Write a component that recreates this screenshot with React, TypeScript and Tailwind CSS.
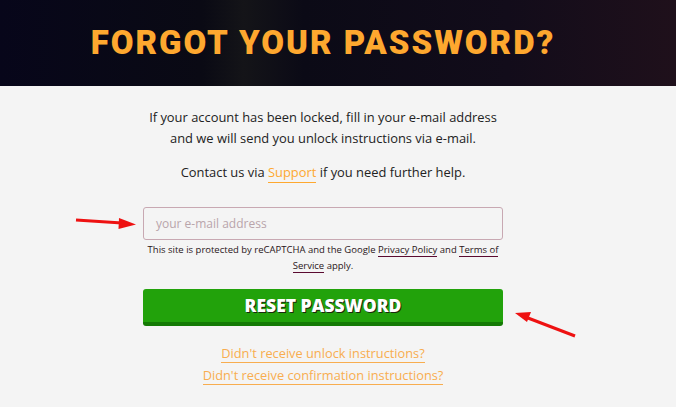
import React from "react";

export default function App() {
  return (
    <div className="relative min-h-[407px] w-[676px] bg-[#f4f4f4] overflow-hidden" style={{ fontFamily: '"Open Sans", sans-serif' }}>
      <div className="h-[86px] w-full bg-[linear-gradient(90deg,#07061a_0%,#0a0a14_30%,#141418_36%,#0b0a16_45%,#120c1a_75%,#1f101b_100%)] flex items-center">
        <div className="w-[360px] ml-[143px] flex justify-center">
          <h1 className="whitespace-nowrap text-[#fea82f] text-[33px] leading-none font-black tracking-[2px] mt-[-2px]" style={{ fontFamily: 'Roboto, sans-serif' }}>
            FORGOT YOUR PASSWORD?
          </h1>
        </div>
      </div>
      <div className="w-[360px] ml-[143px] flex flex-col items-center pt-[21px]">
        <p className="text-[12.9px] leading-[21px] text-[#222] text-center whitespace-nowrap">
          If your account has been locked, fill in your e-mail address<br />
          and we will send you unlock instructions via e-mail.
        </p>
        <p className="text-[12.9px] leading-[21px] text-[#222] text-center mt-[13px] whitespace-nowrap">
          Contact us via <a className="text-[#fea82f] border-b border-[#fea82f] pb-[1px]">Support</a> if you need further help.
        </p>
        <div className="mt-[24px] w-full">
          <div className="h-[33px] w-full rounded-[3px] border border-[#c8a8b2] bg-[#f4f4f4] flex items-center px-[12px]">
            <span className="text-[12px] text-[#b9a5ab]">your e-mail address</span>
          </div>
        </div>
        <p className="text-[9.5px] leading-[16px] text-[#2a1420] text-center mt-[2px]">
          This site is protected by reCAPTCHA and the Google <a className="border-b border-[#5a0a30]">Privacy Policy</a> and <a className="border-b border-[#5a0a30]">Terms of Service</a> apply.
        </p>
        <button className="mt-[15px] w-full h-[37px] rounded-[3px] bg-[#22a20b] border-b-[4px] border-[#147a05] flex items-center justify-center text-white text-[17.5px] font-extrabold" style={{ textShadow: '1px 1px 0 #1a2a10' }}>
          RESET PASSWORD
        </button>
        <a className="mt-[18px] text-[12.8px] leading-[18px] text-[#f8ad4f] border-b border-[#f8ad4f]">Didn't receive unlock instructions?</a>
        <a className="mt-[3px] text-[12.8px] leading-[18px] text-[#f8ad4f] border-b border-[#f8ad4f]">Didn't receive confirmation instructions?</a>
      </div>
      <svg className="absolute left-0 top-0 pointer-events-none" width="676" height="407">
        <line x1="76" y1="220" x2="122" y2="223" stroke="#ee1111" strokeWidth="3" />
        <polygon points="136,224.5 119,218 118.5,229" fill="#ee1111" />
        <line x1="575" y1="336" x2="528" y2="318" stroke="#ee1111" strokeWidth="3" />
        <polygon points="515,313 531,312 527,322" fill="#ee1111" />
      </svg>
    </div>
  );
}
